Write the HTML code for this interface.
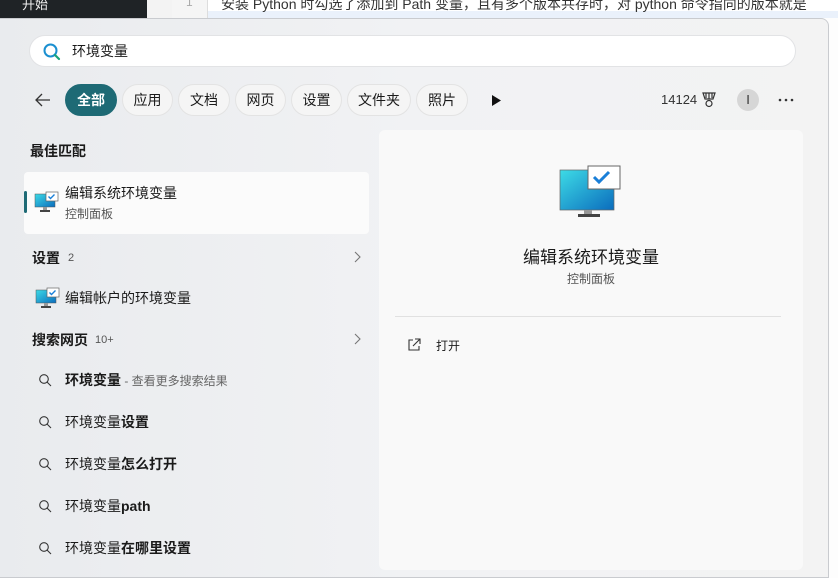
<!DOCTYPE html>
<html><head><meta charset="utf-8"><style>
*{margin:0;padding:0;box-sizing:border-box}
body{width:838px;height:565px;overflow:hidden;position:relative;background:#fdfdfd;font-family:"Liberation Sans","Noto Sans CJK SC",sans-serif;color:#1a1a1a}
.abs{position:absolute}
.panel{left:0;top:18px;width:829px;height:560px;background:linear-gradient(90deg,#e9ebee 0%,#f1f2f4 50%,#f3f3f3 100%);border:1px solid #c9cbcf;border-top-right-radius:8px;border-left:none}
.search{left:29px;top:35px;width:767px;height:32px;background:#fff;border:1px solid #e2e3e5;border-radius:16px}
.chip{top:84px;height:32px;border:1px solid #e3e3e3;border-radius:16px;background:#f5f5f5;font-size:14px;line-height:30px;text-align:center;color:#1a1a1a}
.h{font-size:14px;font-weight:bold}
.t{font-size:14px}
.q{position:absolute;left:38px;width:14px;height:14px}
</style></head><body>
<div class="abs" style="left:0;top:0;width:147px;height:18px;background:#1f2326"></div>
<div class="abs" style="left:22px;top:-6px;color:#eee;font-size:13px">开始</div>
<div class="abs" style="left:147px;top:0;width:25px;height:18px;background:#f3f3f3"></div>
<div class="abs" style="left:172px;top:0;width:36px;height:18px;background:#f5f5f5;border-right:1px solid #ddd"></div>
<div class="abs" style="left:186px;top:-5px;color:#aaa;font-size:12px">1</div>
<div class="abs" style="left:208px;top:0;width:630px;height:13px;background:#fff"></div>
<div class="abs" style="left:208px;top:11px;width:630px;height:7px;background:#eaf1fb"></div>
<div class="abs" style="left:221px;top:-6px;font-size:14px;color:#333;white-space:nowrap">安装 Python 时勾选了添加到 Path 变量，且有多个版本共存时，对 python 命令指向的版本就是</div>
<div class="abs panel"></div>
<div class="abs search"></div>
<svg class="abs" style="left:42px;top:42px" width="20" height="20" viewBox="0 0 20 20"><circle cx="8.5" cy="8.5" r="6" fill="none" stroke="#1a8fd0" stroke-width="2"/><path d="M13 13l4 4" stroke="#1aa37a" stroke-width="2.2" stroke-linecap="round"/></svg>
<div class="abs t" style="left:72px;top:41px">环境变量</div>
<svg class="abs" style="left:34px;top:91px" width="18" height="18" viewBox="0 0 18 18"><path d="M16 9H2M8 3L2 9l6 6" fill="none" stroke="#333" stroke-width="1.3"/></svg>
<div class="abs chip" style="left:65px;width:52px;background:#1e6a75;border-color:#1e6a75;color:#fff;font-weight:bold">全部</div>
<div class="abs chip" style="left:122px;width:51px">应用</div>
<div class="abs chip" style="left:178px;width:52px">文档</div>
<div class="abs chip" style="left:235px;width:51px">网页</div>
<div class="abs chip" style="left:291px;width:51px">设置</div>
<div class="abs chip" style="left:347px;width:64px">文件夹</div>
<div class="abs chip" style="left:416px;width:52px">照片</div>
<svg class="abs" style="left:490px;top:94px" width="12" height="13"><path d="M2 1L11 6.5 2 12z" fill="#111"/></svg>
<div class="abs" style="left:661px;top:92px;font-size:13px;color:#333">14124</div>
<svg class="abs" style="left:701px;top:91px" width="16" height="18" viewBox="0 0 16 18"><path d="M2 2h12l-2 6H4z M5 2v5M8 2v6M11 2v5" fill="none" stroke="#333" stroke-width="1.2"/><circle cx="8" cy="12.5" r="3" fill="none" stroke="#333" stroke-width="1.2"/></svg>
<div class="abs" style="left:737px;top:89px;width:22px;height:22px;border-radius:50%;background:#d6d6d6;text-align:center;font-size:13px;line-height:22px;color:#333">I</div>
<svg class="abs" style="left:778px;top:98px" width="16" height="4"><circle cx="2" cy="2" r="1.3" fill="#333"/><circle cx="8" cy="2" r="1.3" fill="#333"/><circle cx="14" cy="2" r="1.3" fill="#333"/></svg>

<div class="abs h" style="left:30px;top:141px">最佳匹配</div>
<div class="abs" style="left:24px;top:172px;width:345px;height:62px;background:#fbfbfb;border-radius:4px"></div>
<div class="abs" style="left:24px;top:191px;width:3px;height:22px;background:#1e6a75;border-radius:2px"></div>
<svg class="abs" style="left:34px;top:191px" width="25" height="24" viewBox="0 0 25 24"><defs><linearGradient id="g" x1="0" y1="0" x2="1" y2="1"><stop offset="0" stop-color="#3ddbe6"/><stop offset="1" stop-color="#0b6cbd"/></linearGradient></defs><rect x="1" y="3" width="20" height="13" fill="url(#g)" stroke="#555" stroke-width=".5"/><rect x="9" y="16" width="4" height="3" fill="#999"/><rect x="6" y="19" width="10" height="2" fill="#444"/><rect x="12" y="1" width="12" height="9" fill="#fff" stroke="#666" stroke-width=".7"/><path d="M14.5 5.5l2 2 4-4" fill="none" stroke="#1a7fd8" stroke-width="1.4"/></svg>
<div class="abs t" style="left:65px;top:183px">编辑系统环境变量</div>
<div class="abs" style="left:65px;top:205px;font-size:12px;color:#555">控制面板</div>
<div class="abs h" style="left:32px;top:248px">设置</div>
<div class="abs" style="left:68px;top:252px;font-size:11px;color:#555">2</div>
<svg class="abs" style="left:353px;top:251px" width="8" height="12"><path d="M2 1l5 5-5 5" fill="none" stroke="#777" stroke-width="1.1"/></svg>
<svg class="abs" style="left:35px;top:287px" width="25" height="24" viewBox="0 0 25 24"><rect x="1" y="3" width="20" height="13" fill="url(#g)" stroke="#555" stroke-width=".5"/><rect x="9" y="16" width="4" height="3" fill="#999"/><rect x="6" y="19" width="10" height="2" fill="#444"/><rect x="12" y="1" width="12" height="9" fill="#fff" stroke="#666" stroke-width=".7"/><path d="M14.5 5.5l2 2 4-4" fill="none" stroke="#1a7fd8" stroke-width="1.4"/></svg>
<div class="abs t" style="left:65px;top:288px">编辑帐户的环境变量</div>
<div class="abs h" style="left:32px;top:330px">搜索网页</div>
<div class="abs" style="left:95px;top:334px;font-size:11px;color:#555">10+</div>
<svg class="abs" style="left:353px;top:333px" width="8" height="12"><path d="M2 1l5 5-5 5" fill="none" stroke="#777" stroke-width="1.1"/></svg>

<svg class="q" style="top:373px" viewBox="0 0 14 14"><circle cx="6" cy="6" r="4.3" fill="none" stroke="#333" stroke-width="1.1"/><path d="M9 9l4 4" stroke="#333" stroke-width="1.1"/></svg>
<div class="abs t" style="left:65px;top:370px"><b>环境变量</b><span style="font-size:12px;color:#666"> - 查看更多搜索结果</span></div>
<svg class="q" style="top:415px" viewBox="0 0 14 14"><circle cx="6" cy="6" r="4.3" fill="none" stroke="#333" stroke-width="1.1"/><path d="M9 9l4 4" stroke="#333" stroke-width="1.1"/></svg>
<div class="abs t" style="left:65px;top:412px">环境变量<b>设置</b></div>
<svg class="q" style="top:457px" viewBox="0 0 14 14"><circle cx="6" cy="6" r="4.3" fill="none" stroke="#333" stroke-width="1.1"/><path d="M9 9l4 4" stroke="#333" stroke-width="1.1"/></svg>
<div class="abs t" style="left:65px;top:454px">环境变量<b>怎么打开</b></div>
<svg class="q" style="top:499px" viewBox="0 0 14 14"><circle cx="6" cy="6" r="4.3" fill="none" stroke="#333" stroke-width="1.1"/><path d="M9 9l4 4" stroke="#333" stroke-width="1.1"/></svg>
<div class="abs t" style="left:65px;top:496px">环境变量<b>path</b></div>
<svg class="q" style="top:541px" viewBox="0 0 14 14"><circle cx="6" cy="6" r="4.3" fill="none" stroke="#333" stroke-width="1.1"/><path d="M9 9l4 4" stroke="#333" stroke-width="1.1"/></svg>
<div class="abs t" style="left:65px;top:538px">环境变量<b>在哪里设置</b></div>

<div class="abs" style="left:379px;top:130px;width:424px;height:440px;background:#f9f9f9;border-radius:6px"></div>
<svg class="abs" style="left:558px;top:165px" width="64" height="54" viewBox="0 0 64 54"><rect x="2" y="5" width="54" height="40" fill="url(#g)" stroke="#666" stroke-width=".7"/><rect x="26" y="45" width="8" height="4" fill="#999"/><rect x="20" y="49" width="22" height="3" fill="#444"/><rect x="30" y="1" width="32" height="23" fill="#fff" stroke="#666" stroke-width="1"/><path d="M36 12l5 5 10-10" fill="none" stroke="#1a7fd8" stroke-width="3"/></svg>
<div class="abs" style="left:379px;width:424px;top:243px;text-align:center;font-size:17px">编辑系统环境变量</div>
<div class="abs" style="left:379px;width:424px;top:270px;text-align:center;font-size:12px;color:#555">控制面板</div>
<div class="abs" style="left:395px;top:316px;width:386px;height:1px;background:#e1e1e1"></div>
<svg class="abs" style="left:407px;top:338px" width="14" height="14" viewBox="0 0 14 14"><path d="M6 2H2v10h10V8M8 1h5v5M13 1L6 8" fill="none" stroke="#333" stroke-width="1.1"/></svg>
<div class="abs" style="left:436px;top:337px;font-size:12px">打开</div>
</body></html>
